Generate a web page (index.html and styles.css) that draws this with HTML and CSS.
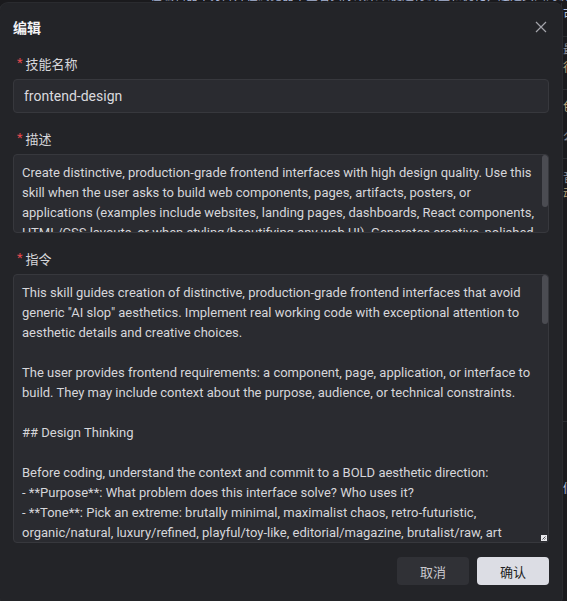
FILE: index.html
```html
<!DOCTYPE html>
<html lang="zh-CN">
<head>
<meta charset="utf-8">
<title>编辑</title>
<link rel="stylesheet" href="styles.css">
</head>
<body>
<div class="page">
  <div class="page-top"><span class="top-text">在编辑器中打开并在浏览器中查看实际效果以便进行调整和优化，这是页面的说明文本内容，可</span></div>
  <div class="page-main"></div>
  <div class="page-side">
    <div class="side-row r1">可</div>
    <div class="side-sep"></div>
    <div class="side-row r2 muted">最</div>
    <div class="side-row r3 warm">行</div>
    <div class="side-sep"></div>
    <div class="side-row r4 warm">色</div>
    <div class="side-row r5 muted">么</div>
    <div class="side-sep"></div>
    <div class="side-row r6 muted">音</div>
    <div class="side-row r7 warm">动</div>
    <div class="side-sep s8"></div>
    <div class="side-row r9">们</div>
  </div>
</div>

<div class="modal" role="dialog" aria-label="编辑">
  <div class="modal-header">
    <span class="title">编辑</span>
    <button class="close" aria-label="关闭">
      <svg width="12" height="12" viewBox="0 0 12 12"><path d="M1 1 L11 11 M11 1 L1 11" stroke="currentColor" stroke-width="1.2" fill="none"/></svg>
    </button>
  </div>
  <div class="form">
    <div class="item">
      <div class="label"><span class="req">*</span>技能名称</div>
      <div class="input">frontend-design</div>
    </div>
    <div class="item">
      <div class="label"><span class="req">*</span>描述</div>
      <div class="textarea short"><div class="lines">Create distinctive, production-grade frontend interfaces with high design quality. Use this
skill when the user asks to build web components, pages, artifacts, posters, or
applications (examples include websites, landing pages, dashboards, React components,
HTML/CSS layouts, or when styling/beautifying any web UI). Generates creative, polished</div><span class="thumb thumb-short"></span></div>
    </div>
    <div class="item">
      <div class="label"><span class="req">*</span>指令</div>
      <div class="textarea tall"><div class="lines">This skill guides creation of distinctive, production-grade frontend interfaces that avoid
generic "AI slop" aesthetics. Implement real working code with exceptional attention to
aesthetic details and creative choices.

The user provides frontend requirements: a component, page, application, or interface to
build. They may include context about the purpose, audience, or technical constraints.

## Design Thinking

Before coding, understand the context and commit to a BOLD aesthetic direction:
- **Purpose**: What problem does this interface solve? Who uses it?
- **Tone**: Pick an extreme: brutally minimal, maximalist chaos, retro-futuristic,
organic/natural, luxury/refined, playful/toy-like, editorial/magazine, brutalist/raw, art
deco/geometric, soft/pastel, industrial/utilitarian, etc.</div><span class="thumb thumb-tall"></span><svg class="grip" width="6" height="6" viewBox="0 0 6 6"><rect x="0" y="0" width="6" height="6" fill="#e8e8ec"/><path d="M1.5 4.5 L4.5 1.5 M3.5 4.5 L4.5 3.5" stroke="#3a3b40" stroke-width="0.9"/></svg></div>
    </div>
  </div>
  <div class="footer">
    <button class="btn cancel">取消</button>
    <button class="btn ok">确认</button>
  </div>
</div>
</body>
</html>
```

FILE: styles.css
```css
html, body {
  margin: 0;
  padding: 0;
}

body {
  width: 567px;
  height: 601px;
  overflow: hidden;
  position: relative;
  background: #1a1a1d;
  font-family: Roboto, "Noto Sans CJK SC", sans-serif;
}

/* background page */
.page {
  display: grid;
  grid-template-columns: 561px 1fr;
  grid-template-rows: 3px 1fr;
  height: 601px;
}

.page-top {
  grid-column: 1 / 3;
  height: 3px;
  overflow: hidden;
  padding-left: 150px;
}

.top-text {
  display: block;
  margin-top: -10px;
  font-size: 12px;
  line-height: 13px;
  white-space: nowrap;
  color: #a9b6d6;
}

.page-main {
  grid-column: 1;
}

.page-side {
  grid-column: 2;
  display: flex;
  flex-direction: column;
  padding-left: 1px;
  overflow: hidden;
  border-left: 1px solid #2b2c30;
}

.side-row {
  font-size: 12px;
  line-height: 14px;
  height: 14px;
  color: #b8c2dc;
  white-space: nowrap;
}

.side-row.muted { color: #8d8f98; }
.side-row.warm { color: #b7a27a; }

.r1 { margin-top: 5px; }
.r2 { margin-top: 6px; }
.r3 { margin-top: 4px; }
.r4 { margin-top: 10px; }
.r5 { margin-top: 16px; }
.r6 { margin-top: 12px; }
.r7 { margin-top: 2px; }
.r9 { margin-top: 60px; }

.side-sep {
  height: 1px;
  background: #2c2d31;
  margin-top: 14px;
}

.side-sep.s8 { margin-top: 220px; }

/* modal */
.modal {
  position: absolute;
  left: 0;
  top: 3px;
  width: 562px;
  box-sizing: border-box;
  padding: 0 13px 20px;
  background: #232428;
  border-radius: 8px;
  box-shadow: 0 0 0 1px #2a2b2f;
}

.modal-header {
  height: 48px;
  display: flex;
  align-items: center;
  justify-content: space-between;
}

.title {
  font-family: "Noto Sans CJK SC", sans-serif;
  font-size: 14px;
  font-weight: 700;
  line-height: 22px;
  color: #f3f3f5;
}

.close {
  width: 14px;
  height: 14px;
  margin-right: 1px;
  padding: 0 1px;
  border: 0;
  background: transparent;
  color: #a3a4aa;
  display: flex;
  align-items: center;
  justify-content: center;
}

.form {
  padding-top: 1px;
}

.item {
  margin-bottom: 14px;
}

.label {
  display: flex;
  align-items: center;
  height: 22px;
  margin-bottom: 5px;
  font-family: "Noto Sans CJK SC", sans-serif;
  font-size: 13px;
  color: #d6d6da;
}

.req {
  font-family: Roboto, sans-serif;
  color: #e5484d;
  margin: -1px 3px 0 4px;
  font-size: 13px;
}

.input {
  height: 34px;
  box-sizing: border-box;
  border: 1px solid #37383d;
  border-radius: 4px;
  background: #2a2b30;
  padding: 0 10px;
  display: flex;
  align-items: center;
  font-size: 14px;
  color: #dadade;
}

.textarea {
  position: relative;
  box-sizing: border-box;
  border: 1px solid #37383d;
  border-radius: 4px;
  background: #2a2b30;
  padding: 8px 8px;
  overflow: hidden;
  font-size: 13px;
  line-height: 20px;
  color: #d6d6da;
}

.textarea.short { height: 79px; }
.textarea.tall { height: 269px; }

.lines {
  white-space: pre;
}

.thumb {
  position: absolute;
  right: 0;
  top: 0;
  width: 6px;
  border-radius: 3px;
  background: #4b4c52;
}

.thumb-short { height: 52px; }
.thumb-tall { height: 49px; }

.grip {
  position: absolute;
  right: 1px;
  bottom: 1px;
}

.footer {
  display: flex;
  justify-content: flex-end;
  gap: 8px;
  margin-top: 8px;
}

.btn {
  width: 72px;
  height: 28px;
  border: 0;
  border-radius: 4px;
  font-family: "Noto Sans CJK SC", sans-serif;
  font-size: 13px;
  padding: 0;
}

.btn.cancel {
  background: #303136;
  color: #c9c9ce;
}

.btn.ok {
  background: #dcdde4;
  color: #1e1f22;
}
```
